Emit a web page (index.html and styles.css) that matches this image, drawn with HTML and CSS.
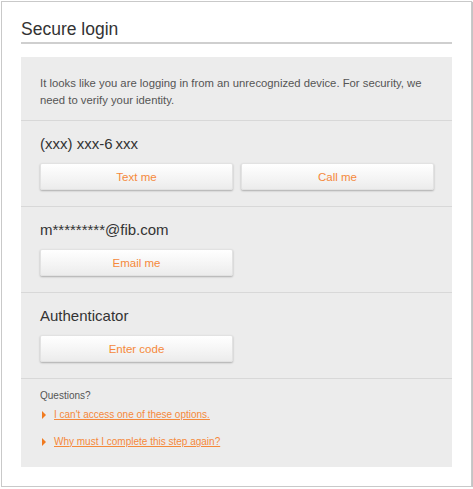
FILE: index.html
```html
<!DOCTYPE html>
<html lang="en">
<head>
<meta charset="utf-8">
<title>Secure login</title>
<link rel="stylesheet" href="styles.css">
</head>
<body>
<div class="frame">
  <h1 class="title">Secure login</h1>
  <div class="panel">
    <div class="section intro">
      <p>It looks like you are logging in from an unrecognized device. For security, we need to verify your identity.</p>
    </div>
    <div class="section option">
      <div class="label">(xxx) xxx-6&#8201;xxx</div>
      <div class="buttons">
        <button class="btn">Text me</button>
        <button class="btn">Call me</button>
      </div>
    </div>
    <div class="section option">
      <div class="label">m*********@fib.com</div>
      <div class="buttons">
        <button class="btn">Email me</button>
      </div>
    </div>
    <div class="section option">
      <div class="label">Authenticator</div>
      <div class="buttons">
        <button class="btn">Enter code</button>
      </div>
    </div>
    <div class="section questions">
      <div class="q-title">Questions?</div>
      <ul class="links">
        <li><span class="arrow"></span><a href="#">I can't access one of these options.</a></li>
        <li><span class="arrow"></span><a href="#">Why must I complete this step again?</a></li>
      </ul>
    </div>
  </div>
</div>
</body>
</html>
```

FILE: styles.css
```css
html, body {
  margin: 0;
  padding: 0;
  background: #fff;
}

body {
  font-family: "Liberation Sans", Arial, sans-serif;
  color: #333;
}

.frame {
  box-sizing: border-box;
  width: 471px;
  height: 486px;
  margin: 1px 0 0 1px;
  border: 1px solid #c9c9c9;
  box-shadow: 1px 1px 1px #c4c4c4;
  padding: 17px 19px 0 19px;
}

.title {
  margin: 0;
  font-size: 17.5px;
  font-weight: normal;
  line-height: 21px;
  color: #333;
  padding-bottom: 2px;
  border-bottom: 2px solid #cfcfcf;
}

.panel {
  margin-top: 13px;
  background: #ececec;
}

.section {
  padding: 0 18px 0 19px;
  border-bottom: 1px solid #d8d8d8;
}

.section:last-child {
  border-bottom: none;
}

.intro {
  padding-top: 18px;
  padding-bottom: 12px;
}

.intro p {
  margin: 0;
  font-size: 11.3px;
  line-height: 16.5px;
  color: #555;
}

.option {
  padding-top: 14px;
  padding-bottom: 16px;
}

.label {
  font-size: 15px;
  line-height: 18px;
  color: #333;
}

.buttons {
  display: flex;
  gap: 8px;
  margin-top: 10px;
}

.btn {
  box-sizing: border-box;
  width: 193px;
  height: 27px;
  margin: 0;
  padding: 0;
  border: 1px solid #e2e2e2;
  border-radius: 2px;
  background: linear-gradient(#ffffff, #f4f4f4 60%, #ececec);
  box-shadow: 0 1px 2px rgba(0, 0, 0, 0.28);
  font-family: "Liberation Sans", Arial, sans-serif;
  font-size: 11.5px;
  color: #f5893b;
  cursor: pointer;
}

.questions {
  padding-top: 10px;
  padding-bottom: 18px;
}

.q-title {
  font-size: 10px;
  line-height: 14px;
  color: #555;
}

.links {
  list-style: none;
  margin: 5px 0 0 0;
  padding: 0;
}

.links li {
  display: flex;
  align-items: center;
  font-size: 10px;
  line-height: 14px;
}

.links li + li {
  margin-top: 12.7px;
}

.arrow {
  width: 0;
  height: 0;
  margin: 0 8px 0 2px;
  border-top: 4px solid transparent;
  border-bottom: 4px solid transparent;
  border-left: 4px solid #f07a1f;
}

.links a {
  color: #f5893b;
  text-decoration: underline;
}
```
